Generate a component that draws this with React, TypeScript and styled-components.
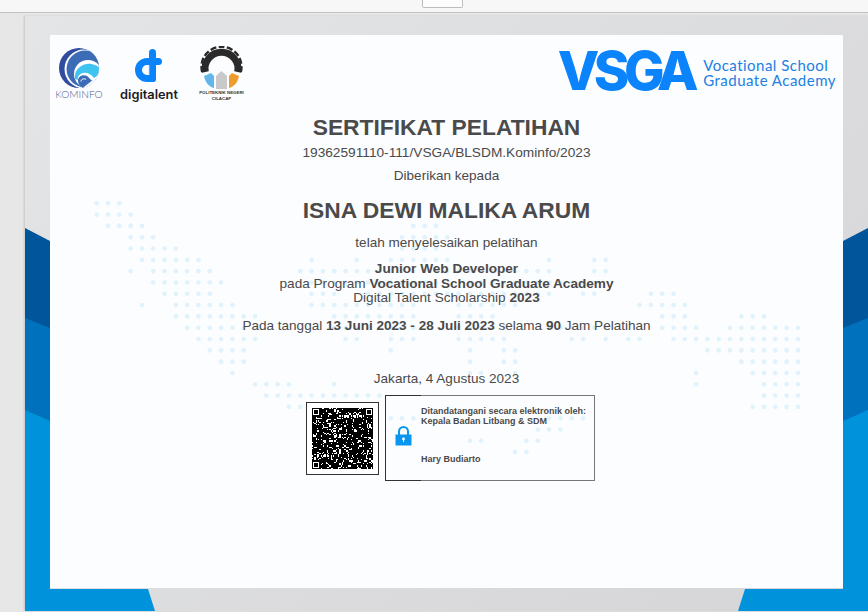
import React from "react";
import styled, { createGlobalStyle } from "styled-components";

const GlobalStyle = createGlobalStyle`
  html, body {
    margin: 0;
    padding: 0;
    background: #e7e7e7;
    overflow: hidden;
  }
`;

const Viewer = styled.div`
  width: 868px;
  height: 612px;
  display: flex;
  flex-direction: column;
  overflow: hidden;
  font-family: "Liberation Sans", Arial, sans-serif;
  color: #4a4a4a;
`;

const Toolbar = styled.div`
  flex: 0 0 12px;
  display: flex;
  justify-content: center;
  padding-left: 16px;
  background: #f7f7f7;
  border-bottom: 1px solid #c2c2c2;
`;

const ToolbarButton = styled.div`
  width: 39px;
  height: 7px;
  background: #fdfdfd;
  border: 1px solid #bdbdbd;
  border-top: none;
  border-radius: 0 0 2px 2px;
`;

const Workspace = styled.div`
  flex: 1;
  padding: 3px 0 1px 25px;
  min-height: 0;
`;

const Page = styled.div`
  position: relative;
  height: 100%;
  box-sizing: border-box;
  padding: 19px 25px 23px 25px;
  background: linear-gradient(135deg, #e4e5e7 0%, #d5d5d7 100%);
  box-shadow: -1px 0 2px rgba(0, 0, 0, 0.15);
`;

const PageArt = styled.svg`
  position: absolute;
  left: 0;
  top: 0;
`;

const Sheet = styled.div`
  position: relative;
  height: 100%;
  background: #fcfdff;
  display: flex;
  flex-direction: column;
  align-items: center;
`;

const DotMap = styled.svg`
  position: absolute;
  left: 0;
  top: 0;
`;

const Header = styled.header`
  position: relative;
  align-self: stretch;
  height: 79px;
  box-sizing: border-box;
  padding: 11px 7px 0 6px;
  display: flex;
  justify-content: space-between;
  align-items: flex-start;
`;

const LogoGroup = styled.div`
  display: flex;
  align-items: flex-start;
`;

const LogoColumn = styled.div<{ $width: number; $gap?: number }>`
  width: ${(p) => p.$width}px;
  margin-left: ${(p) => p.$gap ?? 0}px;
  display: flex;
  flex-direction: column;
  align-items: center;
`;

const KominfoLabel = styled.div`
  font-family: Lato, sans-serif;
  font-weight: 300;
  font-size: 10.2px;
  line-height: 11px;
  margin-top: 1px;
  color: #4d5c90;
  white-space: nowrap;
`;

const TalentLabel = styled.div`
  font-family: Inter, sans-serif;
  font-weight: 600;
  font-size: 12.8px;
  line-height: 13px;
  margin-top: 6px;
  color: #1b1b1f;
  white-space: nowrap;
`;

const PoltekLabel = styled.div`
  font-family: "Liberation Sans", sans-serif;
  font-weight: 700;
  font-size: 4.4px;
  line-height: 6px;
  color: #333;
  text-align: center;
  white-space: nowrap;
`;

const Brand = styled.div`
  display: flex;
  align-items: center;
  gap: 10px;
`;

const BrandMark = styled.div`
  font-family: Inter, sans-serif;
  font-weight: 800;
  font-size: 54px;
  line-height: 44px;
  letter-spacing: -5.5px;
  color: #0b84fb;
  margin-top: 3px;
`;

const BrandName = styled.div`
  font-family: Lato, sans-serif;
  font-size: 15px;
  line-height: 15px;
  letter-spacing: 0.48px;
  color: #2280e2;
  white-space: nowrap;
  margin-top: 7px;
`;

const BrandLine = styled.div`
  height: 15px;
`;

const Title = styled.h1<{ $top?: number }>`
  position: relative;
  margin: ${(p) => p.$top ?? 0}px 0 0;
  font-size: 22.8px;
  line-height: 26px;
  font-weight: 700;
  white-space: nowrap;
`;

const Line = styled.div<{ $top?: number }>`
  position: relative;
  margin-top: ${(p) => p.$top ?? 0}px;
  font-size: 13.55px;
  line-height: 16px;
  white-space: nowrap;
`;

const NumberLine = styled(Line)`
  font-size: 13.7px;
`;

const ProgramBlock = styled.div`
  position: relative;
  margin-top: 11px;
  font-size: 13.6px;
  line-height: 14.5px;
  text-align: center;
  white-space: nowrap;
`;

const SignatureRow = styled.div`
  position: relative;
  margin: 8px 0 0 8px;
  display: flex;
  align-items: center;
  gap: 6px;
`;

const QrFrame = styled.div`
  width: 73px;
  height: 73px;
  margin-top: 1px;
  box-sizing: border-box;
  background: #fff;
  border: 1.5px solid #333;
  display: flex;
  align-items: center;
  justify-content: center;
`;

const SignBox = styled.div`
  position: relative;
  width: 210px;
  height: 86px;
  box-sizing: border-box;
  border: 1px solid #777;
  border-right-width: 1.5px;
  border-left-color: #333;
  display: grid;
  grid-template-columns: 35px 1fr;
  align-items: center;

  &::before {
    content: "";
    position: absolute;
    left: -1px;
    top: -1px;
    bottom: -1px;
    width: 36px;
    border-top: 1px solid #333;
    border-bottom: 1px solid #333;
  }
`;

const LockCell = styled.div`
  display: flex;
  justify-content: center;
  margin-top: -3px;
`;

const SignText = styled.div`
  align-self: start;
  padding-top: 10px;
  font-size: 9px;
  font-weight: 700;
  line-height: 10.5px;
  color: #4a4a4a;
  white-space: nowrap;
`;

const SignerName = styled.div`
  margin-top: 27px;
`;

// rows of the dot map: [row, column ranges]
const DOT_ROWS: [number, string][] = [
  [0, "0-2"],
  [1, "0-3"],
  [2, "1-4,28-30"],
  [3, "3-5,27-31"],
  [4, "3-7,27-30"],
  [5, "4-9,19,23,26-31,40,44-45"],
  [6, "3,5-10,18-40,44-45"],
  [7, "5-11,19-30,33-44"],
  [8, "6-10,19-21,24-40,43-44,49-51"],
  [9, "4,7-12,19-28,32-37,48-52"],
  [10, "7-14,21-28,32-35,50-52,57-59"],
  [11, "8-14,21-28,32-36,40-45,50-53,56-62"],
  [12, "9-14,22-23,26-28,32-36,42-43,45,47-48,51-62"],
  [13, "10-13,26,33,36-37,54-62"],
  [14, "11-13,33,36-37,57-62"],
  [15, "12,33-34,37,53,58-62"],
  [16, "14-17,21,53,59-62"],
  [17, "15-25,59-62"],
  [18, "17-19,58-62"],
  [19, "26-28,40-43"],
  [20, "39-41"],
  [21, "33-34,38-39"],
  [22, "37-38"],
];

const dots: { x: number; y: number }[] = DOT_ROWS.flatMap(([row, spec]) =>
  spec.split(",").flatMap((part) => {
    const [from, to] = part.split("-").map(Number);
    const cols: { x: number; y: number }[] = [];
    for (let c = from; c <= (to ?? from); c++) {
      cols.push({ x: 46.7 + c * 11.31, y: 168.3 + row * 11.31 });
    }
    return cols;
  })
);

// pseudo random modules, the real code can't be read from the picture
const QR_SIZE = 49;
const inFinder = (x: number, y: number, ox: number, oy: number) =>
  x >= ox && x < ox + 7 && y >= oy && y < oy + 7;
const finderOn = (x: number, y: number, ox: number, oy: number) => {
  const dx = x - ox;
  const dy = y - oy;
  if (dx === 0 || dx === 6 || dy === 0 || dy === 6) return true;
  return dx >= 2 && dx <= 4 && dy >= 2 && dy <= 4;
};
const qrModules = (() => {
  const out: { x: number; y: number }[] = [];
  let seed = 20230804;
  for (let y = 0; y < QR_SIZE; y++) {
    for (let x = 0; x < QR_SIZE; x++) {
      seed = (seed * 1664525 + 1013904223) >>> 0;
      const finder: [number, number] | undefined = (
        [
          [0, 0],
          [QR_SIZE - 7, 0],
          [0, QR_SIZE - 7],
        ] as [number, number][]
      ).find(([ox, oy]) => inFinder(x, y, ox, oy));
      const on = finder ? finderOn(x, y, finder[0], finder[1]) : (seed >>> 16) % 100 < 82;
      if (on) out.push({ x, y });
    }
  }
  return out;
})();

const PageBackdrop = () => (
  <PageArt width="843" height="595" viewBox="0 0 843 595">
    <polygon points="0,212 25,225 25,595 0,595" fill="#00559b" />
    <polygon points="843,212 818,225 818,595 843,595" fill="#00559b" />
    <polygon points="0,302 25,312 25,595 0,595" fill="#0071bc" />
    <polygon points="843,302 818,312 818,595 843,595" fill="#0071bc" />
    <polygon points="0,394 25,405 25,595 0,595" fill="#0092db" />
    <polygon points="843,394 818,405 818,595 843,595" fill="#0092db" />
    <polygon points="25,540 25,573 123,573 130,595 0,595 0,540" fill="#0092db" />
    <polygon points="818,540 818,573 720,573 713,595 843,595 843,540" fill="#0092db" />
  </PageArt>
);

const KominfoLogo = () => (
  <svg width="42" height="42" viewBox="0 -2 42 42">
    <clipPath id="globe">
      <circle cx="21" cy="20" r="20" />
    </clipPath>
    <g clipPath="url(#globe)">
      <rect x="0" y="0" width="42" height="40" fill="#2f4c9f" />
      <circle cx="26" cy="21" r="19.500" fill="#fff" />
      <circle cx="27" cy="21" r="18.500" fill="#3c6cb6" />
      <circle cx="30" cy="26" r="14" fill="#fff" />
      <path d="M17 27C18 20 26 15 33 16C37 16.500 40 18 42 20L42 24C40 27 38 29 36 30C33 26 29 24 25 25C21 26 19 29 20 32L17 31Z" fill="#3fc3f1" />
      <path d="M20 33C20 28 25 26 29 28C32 30 33 33 36 33C32 36 28 38 25 40C22 38 20 36 20 33Z" fill="#3c6cb6" />
      <path d="M23 33.500C23 31 26 30 28 31.500" stroke="#fff" strokeWidth="1" fill="none" />
      <path d="M42 24C37 32 30 35 25 40H42Z" fill="#fcfdff" />
    </g>
  </svg>
);

const TalentLogo = () => (
  <svg width="30" height="36" viewBox="0 0 30 36">
    <path d="M18.500 6.500V32.500" stroke="#0b84fb" strokeWidth="7" strokeLinecap="round" fill="none" />
    <path d="M24.500 15.500H13a8.500 8.500 0 0 0 0 17H18.500" stroke="#0b84fb" strokeWidth="7" strokeLinecap="round" fill="none" />
    <path d="M15 19V29" stroke="#bcdcff" strokeWidth="0.8" fill="none" />
  </svg>
);

const PoltekLogo = () => (
  <svg width="45" height="44" viewBox="0 0 45 44">
    <path d="M6.300 26A16.500 16.500 0 1 1 38.700 26" stroke="#2a2a2a" strokeWidth="7" fill="none" />
    <path d="M3.200 26A20 20 0 1 1 41.800 26" stroke="#2a2a2a" strokeWidth="2.400" strokeDasharray="6 2.400" fill="none" />
    <path d="M5 30L12 27L15 30V42C10 41 6 36 5 30Z" fill="#63b6ea" />
    <path d="M17 30L22.500 25L28 30V43H17Z" fill="#c9c9c9" />
    <path d="M40 30L33 27L30 30V42C35 41 39 36 40 30Z" fill="#ef9c2e" />
  </svg>
);

const LockIcon = () => (
  <svg width="17" height="20" viewBox="0 0 17 20">
    <path d="M4 9V5.500a4.500 4.500 0 0 1 9 0V9" stroke="#0a96ee" strokeWidth="2" fill="none" />
    <rect x="0.500" y="8.500" width="16" height="11" fill="#0a96ee" />
    <circle cx="8.500" cy="13" r="1.400" fill="#fff" />
    <rect x="8" y="13" width="1" height="3" fill="#fff" />
  </svg>
);

const QrCode = () => (
  <svg width="61" height="61" viewBox={`0 0 ${QR_SIZE} ${QR_SIZE}`} shapeRendering="crispEdges">
    {qrModules.map((m) => (
      <rect key={`${m.x}-${m.y}`} x={m.x} y={m.y} width="1" height="1" fill="#000" />
    ))}
  </svg>
);

export default function App() {
  return (
    <Viewer>
      <GlobalStyle />
      <Toolbar>
        <ToolbarButton />
      </Toolbar>
      <Workspace>
        <Page>
          <PageBackdrop />
          <Sheet>
            <DotMap width="793" height="553" viewBox="0 0 793 553">
              {dots.map((d) => (
                <circle key={`${d.x}-${d.y}`} cx={d.x} cy={d.y} r="2.300" fill="#e0f2fb" />
              ))}
            </DotMap>
            <Header>
              <LogoGroup>
                <LogoColumn $width={46}>
                  <KominfoLogo />
                  <KominfoLabel>KOMINFO</KominfoLabel>
                </LogoColumn>
                <LogoColumn $width={58} $gap={18}>
                  <TalentLogo />
                  <TalentLabel>digitalent</TalentLabel>
                </LogoColumn>
                <LogoColumn $width={45} $gap={21}>
                  <PoltekLogo />
                  <PoltekLabel>
                    POLITEKNIK NEGERI
                    <br />
                    CILACAP
                  </PoltekLabel>
                </LogoColumn>
              </LogoGroup>
              <Brand>
                <BrandMark>VSGA</BrandMark>
                <BrandName>
                  <BrandLine>Vocational School</BrandLine>
                  <BrandLine>Graduate Academy</BrandLine>
                </BrandName>
              </Brand>
            </Header>
            <Title>SERTIFIKAT PELATIHAN</Title>
            <NumberLine $top={5}>19362591110-111/VSGA/BLSDM.Kominfo/2023</NumberLine>
            <Line $top={7}>Diberikan kepada</Line>
            <Title as="h2" $top={13}>
              ISNA DEWI MALIKA ARUM
            </Title>
            <Line $top={12}>telah menyelesaikan pelatihan</Line>
            <ProgramBlock>
              <b>Junior Web Developer</b>
              <br />
              pada Program <b>Vocational School Graduate Academy</b>
              <br />
              Digital Talent Scholarship <b>2023</b>
            </ProgramBlock>
            <Line $top={12}>
              Pada tanggal <b>13 Juni 2023 - 28 Juli 2023</b> selama <b>90</b> Jam Pelatihan
            </Line>
            <Line $top={37}>Jakarta, 4 Agustus 2023</Line>
            <SignatureRow>
              <QrFrame>
                <QrCode />
              </QrFrame>
              <SignBox>
                <LockCell>
                  <LockIcon />
                </LockCell>
                <SignText>
                  Ditandatangani secara elektronik oleh:
                  <br />
                  Kepala Badan Litbang &amp; SDM
                  <SignerName>Hary Budiarto</SignerName>
                </SignText>
              </SignBox>
            </SignatureRow>
          </Sheet>
        </Page>
      </Workspace>
    </Viewer>
  );
}
